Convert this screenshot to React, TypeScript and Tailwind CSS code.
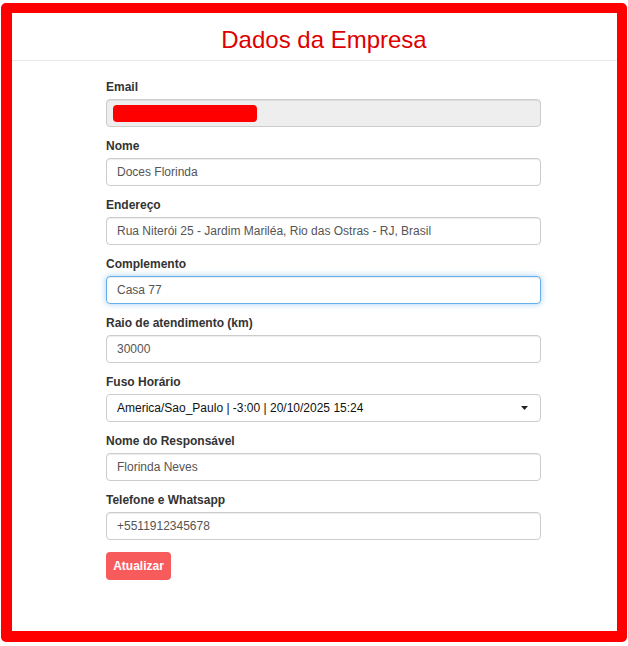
import React from "react";

const labelCls = "block text-[12px] leading-[17px] font-bold text-[#333]";
const boxInput = "h-[28px] w-full rounded-[4px] border text-[12px] flex items-center";
const baseInput = boxInput + " px-[10px]";
const inputCls =
  baseInput + " border-[#ccc] bg-white text-[#555] shadow-[inset_0_1px_1px_rgba(0,0,0,0.075)]";

function Field({ label, children }: { label: string; children: React.ReactNode }) {
  return (
    <div className="mb-[11px]">
      <div className={labelCls + " mb-[3px]"}>{label}</div>
      {children}
    </div>
  );
}

export default function App() {
  return (
    <div
      className="w-[628px] h-[646px] bg-white pl-[1px] pt-[3px]"
      style={{ fontFamily: '"Liberation Sans", Arial, sans-serif' }}
    >
      <div className="w-[626px] h-[639px] border-[11px] border-t-[10px] border-r-[10px] border-[#ff0000] rounded-[5px] bg-white">
        <div className="h-[48px] border-b border-[#e8e8e8] flex items-center justify-center pl-[19px]">
          <h1 className="text-[24px] leading-none text-[#dd0000] mt-[7px]">Dados da Empresa</h1>
        </div>
        <div className="pl-[94px] pr-[76px] pt-[18px]">
          <Field label="Email">
            <div className={boxInput + " pl-[6px] border-[#ccc] bg-[#eeeeee] shadow-[inset_0_1px_1px_rgba(0,0,0,0.075)]"}>
              <div className="h-[17px] w-[144px] rounded-[4px] bg-[#ff0000]" />
            </div>
          </Field>
          <Field label="Nome">
            <div className={inputCls}>Doces Florinda</div>
          </Field>
          <Field label="Endereço">
            <div className={inputCls}>Rua Niterói 25 - Jardim Mariléa, Rio das Ostras - RJ, Brasil</div>
          </Field>
          <Field label="Complemento">
            <div className={baseInput + " border-[#66afe9] bg-white text-[#555] shadow-[inset_0_1px_1px_rgba(0,0,0,0.075),0_0_6px_rgba(102,175,233,0.6)]"}>
              Casa 77
            </div>
          </Field>
          <Field label="Raio de atendimento (km)">
            <div className={inputCls}>30000</div>
          </Field>
          <Field label="Fuso Horário">
            <div className={baseInput + " border-[#ccc] bg-white justify-between text-[#111]"}>
              <span>America/Sao_Paulo | -3:00 | 20/10/2025 15:24</span>
              <svg width="7" height="4" viewBox="0 0 7 4" className="mr-[2px]">
                <path d="M0 0 L7 0 L3.5 4 Z" fill="#222" />
              </svg>
            </div>
          </Field>
          <Field label="Nome do Responsável">
            <div className={inputCls}>Florinda Neves</div>
          </Field>
          <Field label="Telefone e Whatsapp">
            <div className={inputCls}>+5511912345678</div>
          </Field>
          <button className="mt-[1px] h-[28px] w-[65px] rounded-[4px] bg-[#f85b5b] text-white text-[12px] font-bold">
            Atualizar
          </button>
        </div>
      </div>
    </div>
  );
}
